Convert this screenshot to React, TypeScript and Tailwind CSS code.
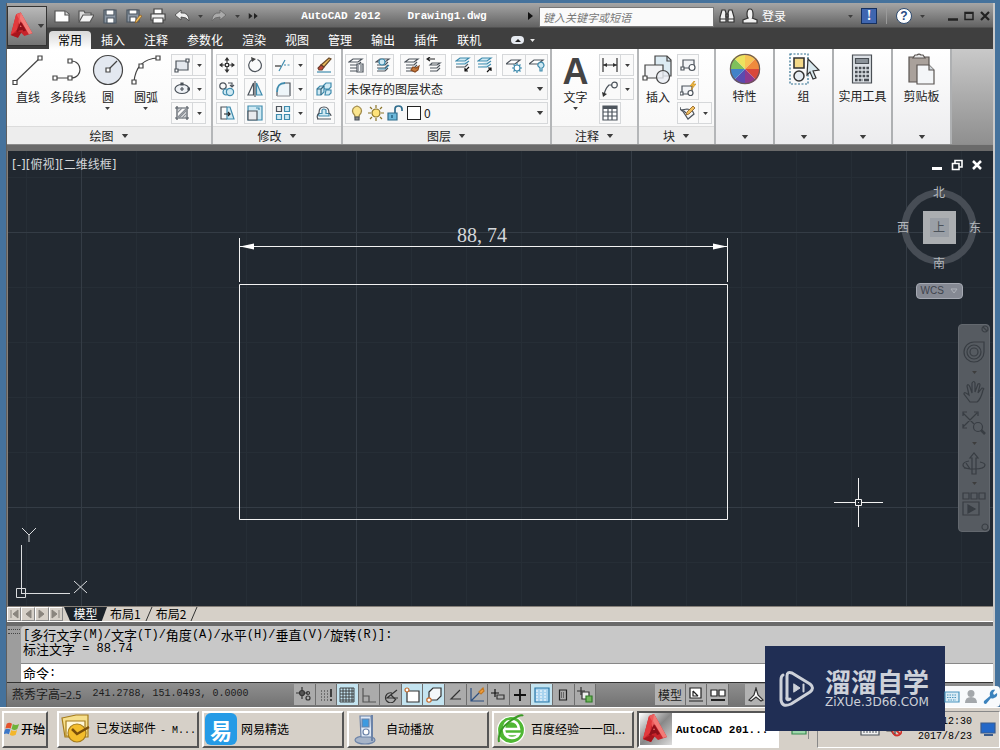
import type { ReactNode } from "react";

type IconProps = { children: ReactNode; size?: string; box?: string; color?: string };

function Icon({ children, size = "size-4", box = "0 0 16 16", color = "#4d545c" }: IconProps) {
  return (
    <svg viewBox={box} className={`${size} shrink-0`} fill="none" stroke={color} strokeWidth="1.2" aria-hidden="true">
      {children}
    </svg>
  );
}

function Caret({ small = false, light = false }: { small?: boolean; light?: boolean }) {
  return (
    <svg viewBox="0 0 8 5" className={small ? "h-[3px] w-[5px] shrink-0" : "h-[4px] w-[8px] shrink-0"} aria-hidden="true">
      <path d="M0 0h8L4 5z" fill={light ? "#e8e8e8" : "#3d3d3d"} />
    </svg>
  );
}

const blue = "#3f8bad";
const pale = "#cfe9f3";

/* ---------- small ribbon icons ---------- */

const layersShape = (
  <>
    <path d="M5 2h9l-4 3H1z" fill="#fff" />
    <path d="M2 8h8l3-3M2 11h8l3-3M2 14h8l3-3" />
  </>
);

const icons = {
  rect: <Icon><path d="M2 4h12v9H2z" fill="#e4e8ee" /><path d="M1 12h3v3H1zM12 2h3v3h-3z" fill="#fff" /></Icon>,
  ellipse: <Icon><ellipse cx="8" cy="8" rx="7" ry="4.5" fill="#eef1f5" /><path d="M6 8h4M8 6v4" /><path d="M7 2h2v2H7zM14 7h1.500v2H14z" fill="#444" /></Icon>,
  hatch: <Icon><path d="M3 1v14M13 1v14M1 3h14M1 13h14" /><path d="M3 8l5-5M3 13L13 3M8 13l5-5M3 5l2-2M5 13l8-8M11 13l2-2" stroke="#8a8f96" /></Icon>,
  move: <Icon><path d="M8 1v5M8 10v5M1 8h5M10 8h5" stroke="#333" /><path d="M5.500 3.500L8 0l2.500 3.500zM5.500 12.500L8 16l2.500-3.500zM3.500 5.500L0 8l3.500 2.500zM12.500 5.500L16 8l-3.500 2.500z" fill="#333" stroke="none" /><path d="M6.500 6.500h3v3h-3z" fill="#fff" stroke="#333" /></Icon>,
  rotate: <Icon><path d="M10.500 2.500A6.300 6.300 0 1 1 5 2.800" /><path d="M4 0l5 2-4 3z" fill="#444" stroke="none" /></Icon>,
  trim: <Icon><path d="M0 9h6" stroke="#333" /><path d="M4 14L10 3" stroke={blue} /><path d="M9 8h7" stroke={blue} strokeDasharray="2 1.500" /></Icon>,
  erase: <Icon><path d="M1 15h14" stroke={blue} /><path d="M13 1l2 1-7 8-3-2z" fill="#e8b95a" stroke="#6a4a2a" /><path d="M5 8l3 2-2 3H3l-1-2z" fill="#c14a35" stroke="#6a3a2a" /></Icon>,
  copy: <Icon><circle cx="4" cy="5" r="3.200" /><circle cx="7" cy="11" r="3" fill={pale} stroke={blue} /><circle cx="11" cy="11" r="3.600" fill={pale} stroke={blue} /><path d="M9 2h4v3M11 4l2 2 2-2" /></Icon>,
  mirror: <Icon><path d="M6.500 2v12H1z" fill="#fff" /><path d="M9.500 2v12H15z" fill={pale} stroke={blue} /><path d="M8 0v16" /></Icon>,
  fillet: <Icon><path d="M2 14V9q1-7 8-7h4v12z" fill="#eef5f9" stroke="none" /><path d="M2 15V11M9 2h6v13" /><path d="M2 15h13" stroke="#9aa0a6" /><path d="M2 11q0-9 8-9" stroke={blue} strokeWidth="1.800" /></Icon>,
  explode: <Icon><path d="M1 8l3-3h4v6l-3 3H1zM7 5l3-3h5v4l-2 2H9zM10 9h5v3l-2 2h-4z" fill={pale} stroke={blue} /><path d="M1 8h4v6M5 8l3-3" stroke="#33647c" /></Icon>,
  stretch: <Icon><path d="M8 14H2V2h6" /><path d="M8 2h3l4 12H8z" fill={pale} stroke={blue} /><path d="M5 9h6M9 7l2 2-2 2" stroke="#222" /></Icon>,
  scale: <Icon><path d="M1 1h14v14H1z" fill={pale} stroke={blue} /><path d="M1 6h9v9H1z" fill="#e8eaed" /><path d="M12 5V3h-3" stroke={blue} /></Icon>,
  array: <Icon><path d="M1.500 1.500h5v5h-5z" fill="#eee" /><path d="M9.500 1.500h5v5h-5zM1.500 9.500h5v5h-5zM9.500 9.500h5v5h-5z" fill={pale} stroke={blue} /></Icon>,
  offset: <Icon><path d="M5 11h8V8.500H10V5q-2.500-2-4 0v3.500H3q-1 1.200 0 2.500z" fill={pale} stroke={blue} /><path d="M1 14h14M2 14q-2-3 1-6 0-6 5-6t5 6q2 1 2 3" /></Icon>,
  layerProps: <Icon>{layersShape}<path d="M9 7h6v8H9z" fill="#f4f6f9" /><path d="M10 9h1M12 9h2M10 11h1M12 11h2M10 13h1M12 13h2" /></Icon>,
  layerMatch: <Icon>{layersShape}<circle cx="7" cy="5" r="3" fill={pale} stroke={blue} /><path d="M3 12h7l4-4" stroke={blue} /></Icon>,
  layerPaint: <Icon>{layersShape}<path d="M9 10l3 1 3-2-1 4-3 2-4-2z" fill="#c77a3a" stroke="#8b4a1f" /></Icon>,
  layerPrev: <Icon><path d="M6 6h8l-3 2H4zM4 11h7l3-3M4 14h7l3-3" /><path d="M1 2h8M4 0L1 2l3 2" stroke="#222" /></Icon>,
  layerIso: <Icon><path d="M5 1h9l-4 3H1zM1 7h9l4-3" fill={pale} stroke={blue} /><path d="M1 10h9l3-3" /><path d="M14 10l-4 4m0-3v3h3" stroke="#111" /></Icon>,
  layerUniso: <Icon><path d="M5 1h9l-4 3H1zM1 7h9l4-3M1 10h9l4-3" fill={pale} stroke={blue} /><path d="M10 15l4-4m-3 0h3v3" stroke="#111" /></Icon>,
  layerFreeze: <Icon><path d="M5 3h9l-5 4H0z" fill="#fff" /><path d="M11 6v10M6 11h10M7.500 7.500l7 7M14.500 7.500l-7 7" stroke={blue} /><circle cx="11" cy="11" r="3" fill="#fff" stroke={blue} /></Icon>,
  layerOff: <Icon><path d="M5 3h9l-5 4H0z" fill="#fff" /><path d="M9 9a3 3 0 1 1 4 2v3h-2v-3z" fill={pale} stroke={blue} /></Icon>,
  linear: <Icon><path d="M1 1v14M15 1v14M1 8h14" stroke="#333" /><path d="M1 8l4-2v4zM15 8l-4-2v4z" fill="#333" stroke="none" /></Icon>,
  leader: <Icon><circle cx="12.500" cy="4" r="2.800" /><path d="M10 4H7Q3 8 2 14" /><path d="M0 11l1 5 4-3z" fill="#333" stroke="none" /></Icon>,
  table: <Icon><path d="M1 1h14v14H1z" fill="#fff" /><path d="M1 2.500h14" strokeWidth="3" /><path d="M1 7h14M1 11h14M6 4v11M10 4v11" /></Icon>,
  blockCreate: <Icon><path d="M3 3h11v8H3z" fill="#f1f3f6" /><path d="M1 10h3v3H1z" fill="#fff" /><circle cx="12" cy="10.500" r="3" fill="#fff" /></Icon>,
  blockEdit: <Icon><path d="M2 5h10v8H2z" fill="#f1f3f6" /><path d="M0 11h3v3H0z" fill="#fff" /><circle cx="10.500" cy="12" r="2.500" fill="#fff" /><path d="M14 0l-4 5h3l-2 4 5-6h-3l2-3z" fill="#f0b840" stroke="#c48a1a" strokeWidth=".6" /></Icon>,
  attribute: <Icon><path d="M2 5l6 9 6-5-2-4-5-1z" fill="#f4f4f4" /><path d="M0 2q0 4 4 4l2 2" /><path d="M13 1l2 2-6 6-3 1 1-3z" fill="#f0c060" stroke="#8a5a20" strokeWidth=".8" /></Icon>,
};

function ToolButton({ icon, label }: { icon: ReactNode; label: string }) {
  return (
    <button aria-label={label} className="flex h-[22px] w-[22px] items-center justify-center border border-[#d6d8da] bg-[#fafafa]">
      {icon}
    </button>
  );
}

function SplitButton({ icon, label }: { icon: ReactNode; label: string }) {
  return (
    <div className="flex h-[22px] border border-[#d6d8da] bg-[#fafafa]">
      <button aria-label={label} className="flex w-[21px] items-center justify-center border-r border-[#d6d8da]">{icon}</button>
      <button aria-label={`${label}选项`} className="flex w-[12px] items-center justify-center"><Caret small /></button>
    </div>
  );
}

function PairButton({ items }: { items: [ReactNode, string][] }) {
  return (
    <div className="flex h-[22px] border border-[#d6d8da] bg-[#fafafa]">
      {items.map(([icon, label], i) => (
        <button key={label} aria-label={label} className={`flex w-[22px] items-center justify-center ${i ? "border-l border-[#d6d8da]" : ""}`}>{icon}</button>
      ))}
    </div>
  );
}

function BigButton({ icon, label, caret = false }: { icon: ReactNode; label: string; caret?: boolean }) {
  return (
    <button className="flex flex-col items-center whitespace-nowrap">
      <span className="flex h-8 items-center">{icon}</span>
      <span className="mt-[3px] text-xs leading-4">{label}</span>
      {caret && <span className="mt-[2px] flex"><Caret small /></span>}
    </button>
  );
}

function Panel({ title, children, className }: { title: string; children: ReactNode; className: string }) {
  return (
    <section className={`flex shrink-0 flex-col border-r-2 border-[#b4b6b8] bg-gradient-to-b from-white to-[#f7f7f7] ${className}`}>
      <div className="flex flex-1 items-start pt-[5px]">{children}</div>
      <button className="flex h-[18px] items-center justify-center gap-[7px] border-t border-[#dcdcdc] bg-[#ededed] text-xs leading-4">
        {title}<Caret />
      </button>
    </section>
  );
}

function SlimPanel({ label, icon }: { label: string; icon: ReactNode }) {
  return (
    <section className="flex w-[59px] shrink-0 flex-col items-center justify-between border-r-2 border-[#aeb0b2] bg-gradient-to-b from-white to-[#ececee] pb-[5px] pt-[4px]">
      <button className="flex flex-col items-center whitespace-nowrap">
        <span className="flex h-8 items-center">{icon}</span>
        <span className="mt-[3px] text-xs leading-4">{label}</span>
      </button>
      <button aria-label={`展开${label}`} className="flex"><Caret /></button>
    </section>
  );
}

/* ---------- header ---------- */

function Logo({ className }: { className: string }) {
  return (
    <svg viewBox="0 0 32 32" className={className} aria-hidden="true">
      <path d="M3 26L9 3l5-2 13 23-9 3-4-4-3 6z" fill="#c7242b" />
      <path d="M9 3l5-2 5 9-7 4z" fill="#ed5b5b" />
      <path d="M14 1l13 23-4 1L13 8z" fill="#f27b77" />
      <path d="M3 26L9 3l3 5-2 12z" fill="#e23a3d" />
      <path d="M9 22l5-11 6 10-3 1-1-2-4 1-1 2z" fill="#8e1019" />
      <path d="M13 17l1-2 1 2z" fill="#f06b68" />
      <path d="M3 26l8-4 4 1-4 6z" fill="#a8151c" />
    </svg>
  );
}

function QuickTools() {
  return (
    <div className="flex shrink-0 items-center gap-[8px] pl-[7px]">
      <button aria-label="新建"><Icon color="#555"><path d="M1 3h10l4 3v8H1z" fill="#fff" /><path d="M11 3v4h4" fill="#ddd" /></Icon></button>
      <button aria-label="打开"><Icon color="#555"><path d="M1 13V3h5l1 2h6v3" fill="#ddd" /><path d="M1 14l4-7h11l-4 7z" fill="#f3f3f3" /></Icon></button>
      <button aria-label="保存"><Icon color="#4a5560"><path d="M2 2h12v13H2z" fill="#8d98a5" /><path d="M4 2h8v5H4zM5 10h7v5H5z" fill="#fff" /></Icon></button>
      <button aria-label="另存为"><Icon color="#4a5560"><path d="M1 2h12v12H1z" fill="#8d98a5" /><path d="M3 2h8v4H3zM4 9h6v5H4z" fill="#fff" /><path d="M14 7l2 1-5 6-2 1 1-3z" fill="#f0c060" stroke="#8a5a20" strokeWidth=".7" /></Icon></button>
      <button aria-label="打印"><Icon color="#444"><path d="M4 1h8v5H4z" fill="#fff" /><path d="M1 6h14v6H1z" fill="#eee" /><path d="M3 10h10v5H3z" fill="#fff" /></Icon></button>
      <button aria-label="放弃"><Icon color="#444"><path d="M1 7l6-5v3q8-1 8 8-2-4-8-4v3z" fill="#eee" strokeWidth=".8" /></Icon></button>
      <Caret small />
      <button aria-label="重做"><Icon color="#666"><path d="M15 7L9 2v3Q1 4 1 13q2-4 8-4v3z" fill="#aaa" strokeWidth=".8" /></Icon></button>
      <Caret small />
      <button aria-label="更多"><Icon size="h-3 w-3"><path d="M1 4l5 4-5 4zM8 4l5 4-5 4z" fill="#222" stroke="none" /></Icon></button>
    </div>
  );
}

function TitleRight() {
  return (
    <div className="flex w-[279px] shrink-0 items-center pl-[5px] pr-[2px] text-white">
      <button aria-label="搜索"><Icon color="#333"><path d="M3 2h3l1 3v9H1V9zM13 2h-3L9 5v9h6V9z" fill="#f1f1f1" /><path d="M7 6h2v3H7zM1 11h6M9 11h6" fill="#888" /></Icon></button>
      <button className="ml-[7px] flex items-center gap-[4px] text-xs leading-4">
        <Icon color="#333"><path d="M5 6q0-5 3-5t3 5-1 4l5 2v3H1v-3l5-2Q5 9 5 6z" fill="#f1f1f1" /></Icon>登录
      </button>
      <span className="ml-auto flex items-center">
        <Caret small />
        <button aria-label="交换" className="ml-[8px] flex size-4 items-center justify-center border border-[#16305e] bg-[#3f66b0] font-['Liberation_Serif',serif] text-sm font-bold leading-4">!</button>
        <span className="ml-[9px] h-4 w-px bg-[#9a9a9a]" />
        <button aria-label="帮助" className="ml-[9px] flex size-4 items-center justify-center rounded-full border border-[#2d4a70] bg-white font-['Liberation_Sans',sans-serif] text-xs font-bold leading-3 text-[#274a86]">?</button>
        <span className="ml-[8px] mr-[22px] flex"><Caret small /></span>
      </span>
      <span className="flex items-center gap-[4px]">
        <button aria-label="最小化"><Icon size="size-3" box="0 0 12 12" color="#222"><path d="M1 9.500h10" strokeWidth="2.500" /></Icon></button>
        <button aria-label="最大化"><Icon size="size-3" box="0 0 12 12" color="#222"><path d="M2 2.500h8v7H2z" strokeWidth="1.500" /><path d="M2 3h8" strokeWidth="2" /></Icon></button>
        <button aria-label="关闭"><Icon size="size-3" box="0 0 12 12" color="#222"><path d="M2 2l8 8M10 2l-8 8" strokeWidth="2.200" /></Icon></button>
      </span>
    </div>
  );
}

const ribbonTabs = ["常用", "插入", "注释", "参数化", "渲染", "视图", "管理", "输出", "插件", "联机"];

function Header() {
  return (
    <header className="flex bg-[linear-gradient(to_bottom,#a6a6a6,#626262_24px,#3f3f3f_25px)]">
      <button aria-label="应用程序菜单" className="mt-[3px] flex h-10 w-10 shrink-0 items-center border border-[#333] bg-gradient-to-b from-[#b9b9b9] to-[#747474]">
        <Logo className="h-9 w-[29px]" />
        <Caret />
      </button>
      <div className="flex min-w-0 flex-1 flex-col">
        <div className="flex h-[26px] items-center">
          <QuickTools />
          <h1 className="flex flex-1 justify-center gap-[27px] whitespace-nowrap font-['Liberation_Mono',monospace] text-[11px] font-bold leading-4 text-white">
            <span>AutoCAD 2012</span><span>Drawing1.dwg</span>
          </h1>
          <svg viewBox="0 0 5 8" className="mr-[6px] h-2 w-[5px]" aria-hidden="true"><path d="M0 0l5 4-5 4z" fill="#111" /></svg>
          <input aria-label="键入关键字或短语" placeholder="键入关键字或短语" className="mt-[2px] h-5 w-[175px] border border-[#777] bg-[#fafafa] px-[3px] text-[11px] italic outline-none placeholder:text-[#777]" />
          <TitleRight />
        </div>
        <nav className="flex h-[20px] items-end gap-px pl-[2px] text-white">
          {ribbonTabs.map((t, i) => (
            <button key={t} className={`h-[18px] whitespace-nowrap px-[9px] text-xs leading-4 ${i === 0 ? "rounded-t-sm bg-gradient-to-b from-[#d8d8d8] to-white text-black" : ""}`}>{t}</button>
          ))}
          <button aria-label="最小化功能区" className="ml-[20px] flex h-[18px] items-center gap-[6px]">
            <span className="flex h-2 w-[13px] items-center justify-center rounded-sm bg-[#e6eaf0]">
              <svg viewBox="0 0 6 3" className="h-[3px] w-[6px]"><path d="M0 3h6L3 0z" fill="#222" /></svg>
            </span>
            <Caret small light />
          </button>
        </nav>
      </div>
    </header>
  );
}

/* ---------- ribbon ---------- */

const node = "#444";

function Ribbon() {
  return (
    <div className="flex h-[96px] overflow-hidden border-b border-[#8c8c8c] bg-gradient-to-b from-[#c9c9c9] to-[#8f8f8f] text-[#222]">
      <Panel title="绘图" className="w-[206px]">
        <div className="flex flex-1 justify-between pl-[5px] pr-[9px]">
          <BigButton label="直线" icon={<Icon size="size-8" box="0 0 32 32" color={node}><path d="M3 28L28 4" /><path d="M1 26.500h4v4H1zM26 2h4v4h-4z" fill="#fff" /></Icon>} />
          <BigButton label="多段线" icon={<Icon size="size-8" box="0 0 32 32" color={node}><path d="M3 24h16c12 0 12-17 0-17" /><path d="M1 22h4v4H1zM16 22h4v4h-4zM16 5h4v4h-4z" fill="#fff" /></Icon>} />
          <BigButton label="圆" caret icon={<Icon size="size-8" box="0 0 32 32" color={node}><circle cx="16" cy="16" r="14.500" fill="#e3e8f0" /><path d="M16 16L25 7" /><path d="M14 14h4v4h-4z" fill="#fff" /></Icon>} />
          <BigButton label="圆弧" caret icon={<Icon size="size-8" box="0 0 32 32" color={node}><path d="M4 28Q6 5 28 4" /><path d="M2 26h4v4H2zM26 2h4v4h-4zM9 10h4v4H9z" fill="#fff" /></Icon>} />
        </div>
        <div className="mr-[5px] flex flex-col gap-[2px]">
          <SplitButton icon={icons.rect} label="矩形" />
          <SplitButton icon={icons.ellipse} label="椭圆" />
          <SplitButton icon={icons.hatch} label="图案填充" />
        </div>
      </Panel>

      <Panel title="修改" className="w-[130px]">
        <div className="grid flex-1 grid-cols-[22px_22px_35px_22px] justify-between gap-y-[2px] pl-[3px] pr-[6px]">
          <ToolButton icon={icons.move} label="移动" />
          <ToolButton icon={icons.rotate} label="旋转" />
          <SplitButton icon={icons.trim} label="修剪" />
          <ToolButton icon={icons.erase} label="删除" />
          <ToolButton icon={icons.copy} label="复制" />
          <ToolButton icon={icons.mirror} label="镜像" />
          <SplitButton icon={icons.fillet} label="圆角" />
          <ToolButton icon={icons.explode} label="分解" />
          <ToolButton icon={icons.stretch} label="拉伸" />
          <ToolButton icon={icons.scale} label="缩放" />
          <SplitButton icon={icons.array} label="阵列" />
          <ToolButton icon={icons.offset} label="偏移" />
        </div>
      </Panel>

      <Panel title="图层" className="w-[209px]">
        <div className="flex flex-1 flex-col gap-[2px] px-[2px]">
          <div className="flex justify-between">
            <ToolButton icon={icons.layerProps} label="图层特性" />
            <ToolButton icon={icons.layerMatch} label="置为当前" />
            <PairButton items={[[icons.layerPaint, "匹配"], [icons.layerPrev, "上一个"]]} />
            <PairButton items={[[icons.layerIso, "隔离"], [icons.layerUniso, "取消隔离"]]} />
            <PairButton items={[[icons.layerFreeze, "冻结"], [icons.layerOff, "关闭图层"]]} />
          </div>
          <div className="flex h-[22px] items-center border border-[#d6d8da] bg-[#f7f7f7] pr-[3px]">
            <select aria-label="图层状态" className="h-5 min-w-0 flex-1 appearance-none bg-transparent pl-px text-xs leading-4 outline-none"><option>未保存的图层状态</option></select>
            <Caret />
          </div>
          <div className="flex h-[22px] items-center gap-[3px] border border-[#d6d8da] bg-[#f7f7f7] pl-[3px] pr-[3px]">
            <Icon><path d="M6 12Q6 10 4 8q-2-5 4-7 6 2 4 7-2 2-2 4z" fill="#fbe58d" stroke="#a08a4a" /><path d="M6 12h4v3H6z" fill="#888" /></Icon>
            <Icon color="#8a7428"><circle cx="8" cy="8" r="4" fill="#ffe37a" /><path d="M8 0v3M8 13v3M0 8h3M13 8h3M2 2l2 2M12 12l2 2M14 2l-2 2M4 12l-2 2" /></Icon>
            <Icon color="#2f6c8c"><path d="M1 8h9v7H1z" fill="#6cb8da" /><path d="M8 8V4q0-3 3.500-3T15 4v2M5 10v3" strokeWidth="1.700" /></Icon>
            <span className="ml-px size-[14px] border border-[#222] bg-white" />
            <select aria-label="图层" className="h-5 min-w-0 flex-1 appearance-none bg-transparent text-xs leading-4 outline-none"><option>0</option></select>
            <Caret />
          </div>
        </div>
      </Panel>

      <Panel title="注释" className="w-[87px]">
        <div className="flex flex-1 justify-center">
          <BigButton label="文字" caret icon={<span className="pt-[4px] font-['Liberation_Sans',sans-serif] text-[36px] font-bold leading-8 text-[#444]">A</span>} />
        </div>
        <div className="mr-[3px] flex flex-col gap-[2px]">
          <SplitButton icon={icons.linear} label="线性" />
          <SplitButton icon={icons.leader} label="引线" />
          <ToolButton icon={icons.table} label="表格" />
        </div>
      </Panel>

      <Panel title="块" className="w-[77px]">
        <div className="flex flex-1 justify-center">
          <BigButton label="插入" icon={<Icon size="size-8" box="0 0 32 32" color={node}><path d="M13 2h12l4 4v16H13z" fill="#dcebf3" /><path d="M25 2v5h4" /><path d="M3 11h18v13H3z" fill="#f3f4f6" /><path d="M1 22h4v4H1z" fill="#fff" /><circle cx="21" cy="23" r="6.500" fill="#e8ecf2" fillOpacity=".8" /></Icon>} />
        </div>
        <div className="mr-[2px] flex flex-col gap-[2px]">
          <ToolButton icon={icons.blockCreate} label="创建块" />
          <ToolButton icon={icons.blockEdit} label="编辑块" />
          <SplitButton icon={icons.attribute} label="属性" />
        </div>
      </Panel>

      <SlimPanel label="特性" icon={
        <Icon size="size-8" box="-16 -16 32 32" color="none">
          <path d="M0 0V-15A15 15 0 0 1 11-11z" fill="#f7c455" /><path d="M0 0L11-11A15 15 0 0 1 15 0z" fill="#f08a3c" />
          <path d="M0 0H15A15 15 0 0 1 11 11z" fill="#d9483b" /><path d="M0 0L11 11A15 15 0 0 1 0 15z" fill="#8d3a8e" />
          <path d="M0 0V15A15 15 0 0 1-11 11z" fill="#5b4bb0" /><path d="M0 0L-11 11A15 15 0 0 1-15 0z" fill="#4182c8" />
          <path d="M0 0H-15A15 15 0 0 1-11-11z" fill="#7fc05b" /><path d="M0 0L-11-11A15 15 0 0 1 0-15z" fill="#ece25e" />
          <circle r="14.600" stroke="#6b5a56" />
        </Icon>
      } />
      <SlimPanel label="组" icon={
        <Icon size="size-8" box="0 0 32 32" color="#333">
          <path d="M2 1h18v30H2z" stroke="#2e6f8f" strokeDasharray="2 1.500" />
          <path d="M6 5h10v10H6z" fill="#f3d888" strokeWidth="1.600" /><circle cx="11" cy="23" r="5" fill="#e4ebf2" strokeWidth="1.500" />
          <path d="M20 6l11 11-6 1 3 7-3 1-3-7-3 3z" fill="#d9e8ee" />
        </Icon>
      } />
      <SlimPanel label="实用工具" icon={
        <Icon size="size-8" box="0 0 32 32" color="#4a4f55">
          <path d="M6.500 2h19v28h-19z" fill="#dde1e6" /><path d="M9.500 5.500h13v5h-13z" fill="#8b9299" />
          <path d="M9 15h14M9 19h14M9 23h14M9 27h8" strokeWidth="2.600" strokeDasharray="2.600 1.200" /><path d="M18 27h5" strokeWidth="2.600" />
        </Icon>
      } />
      <SlimPanel label="剪贴板" icon={
        <Icon size="size-8" box="0 0 32 32" color="#5a5552">
          <path d="M4 4h20v25H4z" fill="#a9a19b" /><path d="M8 5h12l-2-3h-2q-2-2-4 0h-2z" fill="#e8e8e8" />
          <path d="M12 12h12l5 5v14H12z" fill="#f4f6f8" /><path d="M24 12v5h5" fill="#cfd5da" />
        </Icon>
      } />
    </div>
  );
}

/* ---------- drawing area ---------- */

function ViewCube() {
  return (
    <div className="absolute right-[12px] top-[33px] flex w-[84px] flex-col items-center text-xs leading-3 text-[#b4b8bd]">
      <svg viewBox="0 0 84 88" className="absolute inset-0 h-[88px] w-[84px]" aria-hidden="true">
        <circle cx="42" cy="43" r="34" fill="none" stroke="#474d55" strokeWidth="7" />
        <path d="M26 27h33v33H26z" fill="#abaeb1" />
        <path d="M33 34h19v19H33z" fill="#9a9fa6" />
      </svg>
      <span className="relative mt-[2px]">北</span>
      <div className="relative mt-[23px] flex w-full justify-between">
        <span>西</span><span className="text-[#4c535b]">上</span><span>东</span>
      </div>
      <span className="relative mt-[24px]">南</span>
      <button className="mt-[14px] flex h-4 w-[47px] items-center justify-between rounded border border-[#a5a9b2] bg-[#858993] px-[4px] font-['Liberation_Sans',sans-serif] text-[10px] leading-3 text-[#3f444d]">
        WCS
        <svg viewBox="0 0 8 6" className="h-[6px] w-2"><path d="M1 1h6L4 5z" fill="none" stroke="#aeb2b9" /></svg>
      </button>
    </div>
  );
}

function NavigationBar() {
  return (
    <div className="absolute right-[3px] top-[173px] flex h-[208px] w-8 flex-col items-center justify-between rounded border border-[#63686e] bg-[#565b61]">
      <button aria-label="关闭导航栏" className="self-end"><Icon size="size-2" box="0 0 8 8" color="#3a3f45"><circle cx="4" cy="4" r="3" /><path d="M2 2l4 4" /></Icon></button>
      <button aria-label="控制盘"><Icon size="size-6" box="0 0 24 24" color="#383d43"><path d="M12 2h10v10a10 10 0 1 1-10-10z" /><circle cx="12" cy="12" r="7" /><circle cx="12" cy="12" r="4" /></Icon></button>
      <Caret small />
      <button aria-label="平移"><Icon size="size-6" box="0 0 24 24" color="#383d43"><path d="M8 22q-3-4-6-8 0-3 5 1L5 6q1-3 3 1l2 6V3q2-3 3 0v9l3-8q2-1 2 1l-2 8 4-5q3 0 1 2-2 9-6 12z" /></Icon></button>
      <button aria-label="缩放"><Icon size="size-6" box="0 0 24 24" color="#383d43"><path d="M1 16L15 2M1 2l11 11M1 5V1h4M12 1h4v4M1 13v4h4" /><circle cx="16" cy="16" r="4.500" /><path d="M19 19l4 4" strokeWidth="2.500" /></Icon></button>
      <Caret small />
      <button aria-label="动态观察"><Icon size="size-6" box="0 0 24 24" color="#383d43"><path d="M10 22V6H8l4-5 4 5h-2v16z" /><path d="M18 10q5 1 5 3 0 4-11 4T1 13q0-3 6-4M4 11l4 6-6-1" /></Icon></button>
      <Caret small />
      <button aria-label="运动画面"><Icon size="size-6" box="0 0 24 24" color="#383d43"><path d="M1 1h6v6H1zM9 1h6v6H9zM17 1h6v6h-6zM1 10h16v13H1z" /><path d="M6 13l7 4-7 4z" fill="#383d43" /></Icon></button>
      <button aria-label="导航栏设置" className="self-end"><Icon size="size-2" box="0 0 8 8" color="#3a3f45"><circle cx="4" cy="4" r="3" /></Icon></button>
    </div>
  );
}

function DrawingArea() {
  return (
    <main className="relative flex-1 overflow-hidden border-b border-l border-[#857f78] bg-[#212830]">
      <svg className="absolute inset-0 h-full w-full" fill="none" aria-hidden="true">
        <defs>
          <pattern id="minor" width="55" height="55" x="18" y="26" patternUnits="userSpaceOnUse"><path d="M.5 0v55M0 .5h55" stroke="#262e36" /></pattern>
          <pattern id="major" width="275" height="275" x="73" y="81" patternUnits="userSpaceOnUse"><path d="M.5 0v275M0 .5h275" stroke="#343c45" /></pattern>
        </defs>
        <rect width="100%" height="100%" fill="url(#minor)" />
        <rect width="100%" height="100%" fill="url(#major)" />
        <g stroke="#f2f2f2">
          <path d="M231.500 133.500h488v235h-488z" />
          <path d="M231.500 87v44M719.500 87v44M232 95.500h487" />
          <path d="M232 95.500l14-3v6zM719 95.500l-14-3v6z" fill="#fff" stroke="none" />
          <path d="M826 351.500h21M854 351.500h21M850.500 327v21M850.500 355v21M847.500 348.500h6v6h-6zM850 351.500h1" />
        </g>
        <text x="474" y="91" textAnchor="middle" fill="#d4d7da" className="font-['Liberation_Serif',serif] text-xl">88, 74</text>
      </svg>
      <div className="absolute left-[4px] top-[6px] whitespace-nowrap font-['DejaVu_Sans','Noto_Sans_CJK_SC',sans-serif] text-xs leading-4 text-[#d4d7da]">[-][俯视][二维线框]</div>
      <div className="absolute right-[10px] top-[8px] flex gap-[8px]">
        <button aria-label="最小化图形"><Icon size="size-3" box="0 0 12 12" color="#fff"><path d="M1 9.500h10" strokeWidth="3" /></Icon></button>
        <button aria-label="还原图形"><Icon size="size-3" box="0 0 12 12" color="#fff"><path d="M4 4V1.500h7V8H8M1.500 4.500H8v6H1.500z" strokeWidth="1.600" /></Icon></button>
        <button aria-label="关闭图形"><Icon size="size-3" box="0 0 12 12" color="#fff"><path d="M2 2l8 8M10 2l-8 8" strokeWidth="2.500" /></Icon></button>
      </div>
      <ViewCube />
      <NavigationBar />
      <svg viewBox="0 0 80 76" className="absolute bottom-[3px] left-[6px] h-[76px] w-20" fill="none" stroke="#dadcde" aria-hidden="true">
        <path d="M7.500 18v49M7 66.500h49M2.500 61.500h9v9h-9z" />
        <path d="M8 1l7 7 7-7M15 8v7M60 54l13 12M73 54L60 66" />
      </svg>
    </main>
  );
}

function LayoutTabs() {
  const arrows = ["M2 1v8M9 1L4 5l5 4z", "M8 1L3 5l5 4z", "M2 1l5 4-5 4z", "M8 1v8M1 1l5 4-5 4z"];
  const names = ["第一个", "上一个布局", "下一个布局", "最后一个"];
  return (
    <div className="flex h-[15px] items-stretch border-b border-white bg-[#d6d0c8] text-xs leading-[14px]">
      {arrows.map((d, i) => (
        <button key={d} aria-label={names[i]} className="flex w-[14px] items-center justify-center border border-b-[#888] border-l-white border-r-[#888] border-t-white">
          <svg viewBox="0 0 10 10" className="size-[10px]"><path d={d} fill="#8a857e" stroke="#8a857e" /></svg>
        </button>
      ))}
      <button className="ml-px w-[43px] bg-[#1c2229] text-white [clip-path:polygon(0_0,100%_0,88%_100%,14%_100%)]">模型</button>
      {["布局1", "布局2"].map((t) => (
        <button key={t} className="flex items-center whitespace-nowrap text-black">
          <span className="pl-[3px]">{t}</span>
          <svg viewBox="0 0 9 14" className="ml-[3px] h-[14px] w-[9px]"><path d="M8 0L2 14" stroke="#333" fill="none" /></svg>
        </button>
      ))}
    </div>
  );
}

/* ---------- command window ---------- */

function Ascii({ children }: { children: string }) {
  return <span className="whitespace-pre font-['Liberation_Mono',monospace] text-xs leading-[14px]">{children}</span>;
}

const options: [string, string][] = [["多行文字", "(M)/"], ["文字", "(T)/"], ["角度", "(A)/"], ["水平", "(H)/"], ["垂直", "(V)/"], ["旋转", "(R)]:"]];

function CommandWindow() {
  return (
    <section className="flex border-t-4 border-[#6a6a6a] bg-[#9d9d9d] text-[13px] leading-[14px] text-black">
      <div className="w-[14px] shrink-0 pt-[3px]"><div className="mx-px h-[5px] border-y border-dotted border-[#444]" /></div>
      <div className="flex-1">
        <div className="h-[38px] whitespace-nowrap rounded-tl border-b border-[#888] bg-[#c8c8c8] pl-[2px] pt-[2px]">
          <p className="flex h-[14px] items-center"><Ascii>[</Ascii>{options.map(([name, key]) => <span key={name} className="flex h-[14px] items-center">{name}<Ascii>{key}</Ascii></span>)}</p>
          <p className="flex h-[14px] items-center">标注文字<Ascii>{" = 88.74"}</Ascii></p>
        </div>
        <label className="flex h-[18px] items-center bg-white pl-[2px]">
          命令<Ascii>:</Ascii>
          <input className="h-[14px] min-w-0 flex-1 bg-transparent px-1 outline-none" />
        </label>
      </div>
    </section>
  );
}

/* ---------- status bar ---------- */

const statusTools: { label: string; on?: boolean; draw: ReactNode }[] = [
  { label: "推断约束", draw: <><path d="M6 0v12M0 6h12" /><circle cx="6" cy="6" r="2.500" fill="#555" /><circle cx="12" cy="11" r="2" /><circle cx="12" cy="6" r="1.500" /></> },
  { label: "捕捉", draw: <><path d="M3 4h8M3 7h8M3 10h8M3 13h8" strokeDasharray="1 2" /><path d="M13 2v12" strokeWidth="1.800" strokeDasharray="8 2" /></> },
  { label: "栅格", on: true, draw: <path d="M1 1h14v14H1zM1 4h14M1 7h14M1 10h14M1 13h14M4 1v14M7 1v14M10 1v14M13 1v14" stroke="#333" strokeWidth=".9" /> },
  { label: "正交", draw: <path d="M2 1v14h13M2 9h6v6" stroke="#555" /> },
  { label: "极轴", draw: <><path d="M14 3L4 11h11M9 6a5 5 0 1 0 3 7" /><path d="M8 8l5 5" /></> },
  { label: "对象捕捉", on: true, draw: <><path d="M3 4h12v11H3z" fill="#fff" /><circle cx="3" cy="3" r="2" fill="#fff" stroke="#c56a2c" /></> },
  { label: "三维捕捉", on: true, draw: <><path d="M3 5l4-4h8v8l-4 4H3z" fill="#f4f8fa" /><circle cx="3" cy="13" r="2.200" fill="#fff" stroke="#c56a2c" /></> },
  { label: "对象追踪", draw: <path d="M13 3L4 12h10" /> },
  { label: "动态UCS", draw: <><path d="M2 1v13h13M2 14L13 3" stroke="#2d4f80" /><path d="M10 5l4-4 1 3-3 3z" fill="#f0a040" stroke="#c57820" /></> },
  { label: "动态输入", draw: <><path d="M5 2v8M1 6h8" stroke="#111" /><path d="M7 8h7v4H7z" /></> },
  { label: "线宽", draw: <path d="M8 2v12M2 8h12" stroke="#111" strokeWidth="1.800" /> },
  { label: "透明度", on: true, draw: <><path d="M1 1h14v14H1z" fill="#a8d3ef" stroke="#2a78a8" /><path d="M2 4h12M2 7h12M2 10h12M2 13h12" stroke="#fff" strokeDasharray="2 2" /></> },
  { label: "快捷特性", draw: <><path d="M4.500 3h7v10h-7z" stroke="#222" /><path d="M6 6h4M6 8h4M6 10h4" stroke="#222" strokeDasharray="1 1" /></> },
  { label: "选择循环", draw: <><path d="M4 0v8M0 4h8" /><path d="M5 5h7v7H5z" fill="#eee" /><path d="M9 9h6v6H9z" fill="#71b65b" stroke="#2e7a26" /></> },
];

function StatusBar() {
  return (
    <footer className="flex h-[25px] items-start border-t border-[#333] bg-gradient-to-b from-[#8f8f8f] to-[#727272] pt-px text-xs leading-5 text-[#1c1c1c]">
      <div className="flex w-[287px] shrink-0 items-center gap-[11px] whitespace-nowrap pl-[5px]">
        <span>燕秀字高<span className="text-[11px]">=2.5</span></span>
        <span className="font-['Liberation_Mono',monospace] text-[10px]">241.2788, 151.0493, 0.0000</span>
      </div>
      <div className="flex w-[302px] shrink-0">
        {statusTools.map((t) => (
          <button key={t.label} aria-label={t.label} className={`flex h-[21px] flex-1 items-center justify-center border-r border-[#6e6e6e] ${t.on ? "bg-[#c4e4f0]" : "bg-[#ababab]"}`}>
            <Icon color="#333">{t.draw}</Icon>
          </button>
        ))}
      </div>
      <div className="ml-[59px] flex [&>button]:flex [&>button]:h-[21px] [&>button]:items-center [&>button]:justify-center [&>button]:border-r [&>button]:border-[#6e6e6e] [&>button]:bg-[#b2b2b2]">
        <button className="w-[31px]">模型</button>
        <button aria-label="布局" className="w-[21px]"><Icon color="#222"><path d="M2 1h11v10H2zM1 14h14" fill="#fff" /><path d="M5 4v5h5M5 4l5 5" /></Icon></button>
        <button aria-label="快速查看" className="w-[22px]"><Icon color="#222"><path d="M1 3h6v6H1zM9 3h6v6H9z" fill="#fff" /><path d="M1 13h14" strokeWidth="2" /></Icon></button>
        <span className="w-[16px]" />
        <button aria-label="注释比例" className="w-[22px]"><Icon color="#333"><path d="M8 1l2 7 5 5-2 1-5-4-5 4-2-1 5-5z" fill="#fff" /></Icon></button>
      </div>
    </footer>
  );
}

/* ---------- taskbar ---------- */

function Task({ icon, children, active = false }: { icon: ReactNode; children: ReactNode; active?: boolean }) {
  return (
    <button className={`flex h-[37px] w-[142px] items-center gap-[4px] overflow-hidden whitespace-nowrap border-2 pl-px text-xs leading-4 text-black ${active ? "border-b-white border-l-[#555] border-r-white border-t-[#555] bg-white" : "border-b-[#555] border-l-white border-r-[#555] border-t-white bg-[#d6d0c8]"}`}>
      {icon}
      <span>{children}</span>
    </button>
  );
}

function Taskbar() {
  return (
    <div className="flex h-[43px] shrink-0 items-center border-t border-white bg-[#d6d0c8]">
      <button className="ml-[2px] flex h-[37px] w-[46px] items-center gap-px whitespace-nowrap border-2 border-b-[#555] border-l-white border-r-[#555] border-t-white text-xs font-medium text-black">
        <svg viewBox="0 0 18 18" className="h-4 w-4 shrink-0" aria-hidden="true">
          <path d="M3 3q3-2 6 0L7.500 8.500Q4.500 7 1.500 8.500z" fill="#e5532d" /><path d="M10 3.500q3 2 7 0L15 9q-3 2-6.500 0z" fill="#6fb33a" />
          <path d="M1.200 9.500q3-1.500 6 0L5.500 15q-3-2-6 0z" fill="#3d78c8" /><path d="M8.200 10q3 2 6.500 0l-1.500 5.500q-4 2-6.700 0z" fill="#f3b62a" />
        </svg>
        开始
      </button>
      <div className="ml-[9px] flex gap-[3px]">
        <Task icon={
          <Icon size="size-8" box="0 0 32 32" color="#a57c1c"><path d="M2 5l14-3h12v22H5z" fill="#f6df8c" /><path d="M6 8h19v15H6z" fill="#fff7d8" /><circle cx="17" cy="20" r="9" fill="#f3bd2c" /><path d="M12 16l5 5 12-7" stroke="#7a4f0a" strokeWidth="2.500" /></Icon>
        }>已发送邮件<span className="pl-1 font-['Liberation_Mono',monospace] text-[10px]">- M...</span></Task>
        <Task icon={
          <span className="flex size-8 shrink-0 items-center justify-center rounded-md bg-[#259be6] text-[22px] font-bold leading-8 text-white">易</span>
        }>网易精选</Task>
        <Task icon={
          <Icon size="size-8" box="0 0 32 32" color="#6c83a8"><ellipse cx="15" cy="27" rx="10" ry="4" fill="#a7b4c8" /><path d="M10 3h11l1 21H11z" fill="#dfe9f6" /><path d="M12 6h7v8h-7z" fill="#3d9ae0" /><circle cx="16" cy="19" r="3" fill="#fff" /><path d="M22 2v26" strokeWidth="2" /></Icon>
        }>自动播放</Task>
        <Task icon={
          <Icon size="size-8" box="0 0 32 32" color="#fff"><circle cx="16" cy="17" r="13.500" fill="#4fb733" /><path d="M9 16h15q-1-8-8-8t-7 9q1 8 8 8 5 0 7-4H9" strokeWidth="2.500" /><path d="M4 29Q2 18 14 9T28 3" stroke="#3a9a26" strokeWidth="2" /></Icon>
        }>百度经验一一回...</Task>
        <Task active icon={<Logo className="size-8 shrink-0 bg-gradient-to-br from-white via-[#888] to-[#ddd]" />}>
          <span className="font-['Liberation_Mono',monospace] text-[11px] font-bold">AutoCAD 201...</span>
        </Task>
      </div>
      <div className="flex w-[38px] items-center justify-between pl-[12px] pr-[8px]">
        <Icon color="#3a8a50"><path d="M1 3h14v10H1z" fill="#9fd8ac" /><path d="M3 8h10" /></Icon>
        <span className="h-5 w-px bg-[#888]" />
      </div>
      <div className="flex h-[37px] flex-1 items-center justify-end border border-b-white border-l-[#888] border-r-white border-t-[#888] pr-[3px]">
        <Icon size="h-4 w-5" box="0 0 20 16"><path d="M1 5h18v9H1z" fill="#eee" /><path d="M3 8h14M3 11h14" strokeDasharray="2 1" /></Icon>
        <span className="ml-[6px]"><Icon color="#444"><path d="M1 6h4l4-4v12l-4-4H1z" fill="#ccc" /><circle cx="11" cy="10" r="4.500" stroke="#d2302a" strokeWidth="1.800" /><path d="M8 7l6 6" stroke="#d2302a" strokeWidth="1.800" /></Icon></span>
        <time className="ml-[15px] flex w-[55px] flex-col items-end font-['Liberation_Mono',monospace] text-[10px] leading-[15px] text-black"><span>12:30</span><span>2017/8/23</span></time>
        <span className="ml-[8px]"><Icon color="#3b5c8c"><path d="M1 2h14v10H1z" fill="#2468c8" /><path d="M4 14h9" strokeWidth="2" /></Icon></span>
      </div>
    </div>
  );
}

function Watermark() {
  return (
    <div className="absolute bottom-[19px] right-[55px] flex h-[85px] w-[180px] items-center gap-[10px] bg-[#202e54] pl-[14px] text-[#cdd1d9]">
      <svg viewBox="0 0 36 38" className="h-[38px] w-9 shrink-0" fill="none" stroke="currentColor" strokeWidth="3" strokeLinecap="round" strokeLinejoin="round" aria-hidden="true">
        <path d="M8 29V6q0-5 5-3l18 11q5 4 0 8L12 34Q3 38 2 30V10q0-4 2-5" />
        <path d="M8 28q0 3 3 1" />
        <path d="M15 14l6 4-6 4z" fill="currentColor" strokeWidth="1" /><path d="M24.500 14.500v7" strokeWidth="2" />
      </svg>
      <div className="flex flex-col gap-[3px] whitespace-nowrap">
        <span className="text-[26px] font-bold leading-6">溜溜自学</span>
        <span className="font-['DejaVu_Sans',sans-serif] text-xs leading-3">ZiXUe.3D66.COM</span>
      </div>
    </div>
  );
}

function InputMethodBar() {
  return (
    <div className="absolute bottom-[43px] right-0 flex h-[21px] w-[55px] items-center justify-end gap-[3px] rounded-r-sm bg-[#f8fafc] pr-[2px]">
      <Icon color="#4a94bd"><path d="M1 3h14v10H1z" fill="#d9ecf6" /><path d="M3 6h10M3 8.500h10M4 11h8" strokeDasharray="1.500 1" /></Icon>
      <Icon color="none"><circle cx="8" cy="4.500" r="3.500" fill="#a3a7ab" /><path d="M2 14q0-6 6-6t6 6z" fill="#a3a7ab" /></Icon>
      <Icon color="none"><path d="M10 1q3-1 3 0l-2 3 1 2 3-2q1 4-3 5-2 1-3 0l-5 6q-3 0-2-3l6-5q-1-4 2-6z" fill="#3c83bd" /></Icon>
    </div>
  );
}

export default function App() {
  return (
    <div className="relative flex min-h-screen flex-col bg-[#45729c] font-['Noto_Sans_CJK_SC',sans-serif]">
      <div className="flex flex-1 flex-col pt-[3px]">
        <div className="flex flex-1 flex-col pl-[6px] pr-[5px]">
          <div className="flex flex-1 flex-col border-l border-r-2 border-l-[#5f5f5f] border-r-[#c9c9c9] bg-[#6a6a6a]">
            <Header />
            <Ribbon />
            <div className="h-[6px]" />
            <DrawingArea />
            <LayoutTabs />
            <CommandWindow />
            <StatusBar />
          </div>
        </div>
        <Taskbar />
      </div>
      <Watermark />
      <InputMethodBar />
    </div>
  );
}
